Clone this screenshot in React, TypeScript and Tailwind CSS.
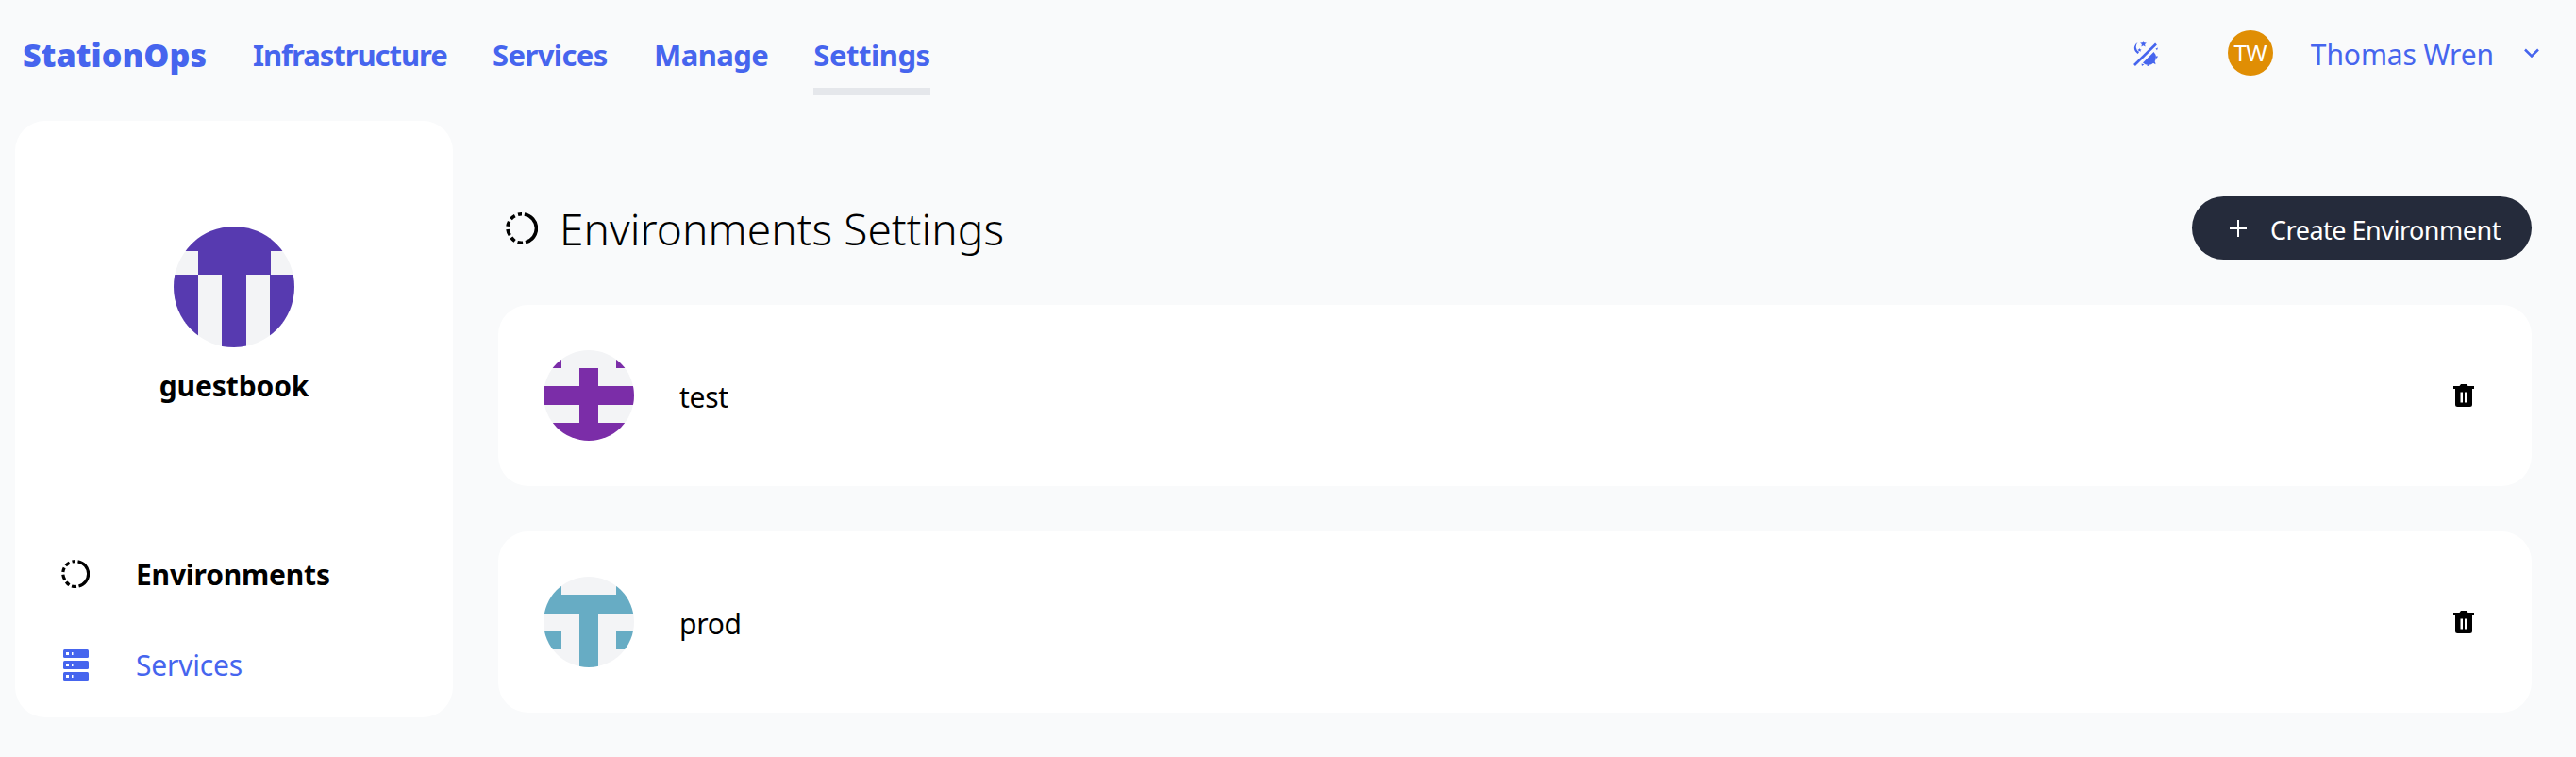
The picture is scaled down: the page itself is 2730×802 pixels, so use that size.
const Identicon = ({ rows, color, size }: { rows: string[]; color: string; size: string }) => (
  <svg viewBox="0 0 5 5" shapeRendering="crispEdges" className={`${size} shrink-0 rounded-full bg-[#f3f4f6]`}>
    {rows.flatMap((row, y) =>
      row.split("").map((cell, x) => (cell === "x" ? <rect key={`${x}-${y}`} x={x} y={y} width="1.01" height="1.01" fill={color} /> : null)),
    )}
  </svg>
);

const DashedCircle = ({ className }: { className: string }) => (
  <svg viewBox="0 0 30 30" fill="none" stroke="currentColor" strokeWidth="3.200" className={className}>
    <path d="M17.500 1.800A13.400 13.400 0 0 1 18.500 28" />
    <path d="M16 28.400A13.400 13.400 0 0 1 11 28" />
    <path d="M8.500 26.800A13.400 13.400 0 0 1 5.200 23.500" />
    <path d="M3.800 21.300A13.400 13.400 0 0 1 1.800 15.800" />
    <path d="M1.800 13A13.400 13.400 0 0 1 3.200 8.600" />
    <path d="M4.800 6.200A13.400 13.400 0 0 1 8.600 3.200" />
    <path d="M11.500 2A13.400 13.400 0 0 1 15 1.600" />
  </svg>
);

const ServerIcon = () => (
  <svg viewBox="0 0 27 33" className="h-[33px] w-[27px]">
    {[0, 12, 24].map((y) => (
      <g key={y}>
        <rect x="0" y={y} width="27" height="9" rx="1.5" fill="#4665ee" />
        <rect x="3" y={y + 3} width="3" height="3" fill="#fff" />
        <rect x="9" y={y + 3} width="1.5" height="3" fill="#fff" />
      </g>
    ))}
  </svg>
);

const TrashIcon = () => (
  <svg viewBox="0 0 22 25" className="h-[25px] w-[22px]">
    <path d="M0 3h6.500L8 1h6l1.500 2H22v3H0z" fill="#000" />
    <path fillRule="evenodd" clipRule="evenodd" d="M2 6h18v16.500a2.500 2.500 0 0 1-2.500 2.500h-13A2.500 2.500 0 0 1 2 22.500zM7.500 9.500v11h2.500v-11zM12 9.500v11h2.500v-11z" fill="#000" />
  </svg>
);

const ThemeIcon = () => (
  <svg viewBox="0 0 27 27" className="h-[27px] w-[27px]" fill="#4665ee">
    <path d="M2 26 25 3.500" stroke="#4665ee" strokeWidth="2.600" />
    <path d="M5.500 2A6.500 6.500 0 0 0 3 11.500l2.500 2.500 1.500-1.500A7 7 0 0 1 5.500 2z" />
    <path d="m11.500 0 1 2.300 2.400.2-1.800 1.600.5 2.400-2.100-1.300-2.100 1.300.5-2.400-1.800-1.600 2.400-.2zM7.500 8l.6 1.300 1.400.1-1 1 .3 1.400-1.300-.7-1.300.7.3-1.400-1-1 1.400-.1z" />
    <path d="M11 23.500 22.500 12a8 8 0 0 1-11.500 11.500z" />
    <path d="m24.500 8.500 2.500-1-1 2.700zM27 16.500h-3l1.700 2.500zM21.500 23.500l3 1.700-.6-3.300zM16 25.500l-1.200 2.800 3.200-.8zM9.500 24.500l.5 2.500 2.400-1.800z" />
  </svg>
);

const Card = ({ name, rows, color }: { name: string; rows: string[]; color: string }) => (
  <div className="flex h-[192px] items-center rounded-[32px] bg-white pl-[48px] pr-[61px]">
    <Identicon rows={rows} color={color} size="size-[96px]" />
    <span className="ml-[48px] mt-[3px] text-[30px] leading-none text-black tracking-[-0.3px]">{name}</span>
    <button className="ml-auto -mt-[2px]">
      <TrashIcon />
    </button>
  </div>
);

export default function App() {
  return (
    <div className="flex h-[802px] w-full flex-col overflow-hidden bg-[#f9fafb] font-['Noto_Sans',sans-serif]">
      <header className="flex h-[128px] shrink-0 items-start justify-between">
        <nav className="flex h-[101px] items-start pl-[24px] text-[31px] font-bold leading-[116px] tracking-[-1.05px] text-[#4665ee]">
          <a className="w-[244px] text-[34px] font-black tracking-[0.1px]">StationOps</a>
          <a className="w-[254px]">Infrastructure</a>
          <a className="w-[171px] tracking-[-0.6px]">Services</a>
          <a className="w-[169px] tracking-[-0.55px]">Manage</a>
          <a className="h-[101px] w-[124px] border-b-8 border-[#e5e7eb] text-center tracking-[-0.45px]">Settings</a>
        </nav>
        <div className="flex h-[112px] items-center pr-[39px] text-[#4665ee]">
          <ThemeIcon />
          <span className="ml-[74px] flex size-[48px] items-center justify-center rounded-full bg-[#e08e04] text-[24px] tracking-[-0.5px] text-white">TW</span>
          <span className="ml-[40px] mt-[2px] text-[30px] tracking-[-0.1px]">Thomas Wren</span>
          <svg viewBox="0 0 16 10" fill="none" stroke="#4665ee" strokeWidth="2.500" className="ml-[32px] h-[10px] w-[16px]">
            <path d="M1 1.500 8 8.500l7-7" />
          </svg>
        </div>
      </header>

      <div className="flex items-start pl-[16px] pr-[47px]">
        <aside className="flex h-[632px] w-[464px] shrink-0 flex-col items-center rounded-[32px] bg-white pt-[112px]">
          <Identicon rows={["xxxxx", ".xxx.", "x.x.x", "x.x.x", "x.x.x"]} color="#573ab0" size="size-[128px]" />
          <h2 className="mt-[20px] text-[30px] font-bold leading-[42px] tracking-[-0.1px] text-black">guestbook</h2>
          <div className="mt-auto flex w-full flex-col pb-[8px] pl-[49px] text-[30px] tracking-[-0.2px]">
            <div className="flex h-[96px] items-center font-bold text-black">
              <span className="flex w-[79px]">
                <DashedCircle className="size-[30px]" />
              </span>
              Environments
            </div>
            <div className="flex h-[96px] items-center text-[#4665ee]">
              <span className="flex w-[79px] pl-[2px]">
                <ServerIcon />
              </span>
              Services
            </div>
          </div>
        </aside>

        <main className="ml-[48px] flex min-w-0 flex-1 flex-col gap-[48px] pt-[80px]">
          <div className="flex h-[67px] items-center justify-between">
            <h1 className="flex items-center pl-[8px] text-[46px] font-light leading-none tracking-[0.1px] text-black">
              <DashedCircle className="mr-[23px] size-[34px]" />
              Environments Settings
            </h1>
            <button className="flex h-[67px] w-[360px] items-center rounded-full bg-[#252b3b] pl-[39px] pt-[5px] text-[27px] tracking-[-0.5px] text-white">
              <svg viewBox="0 0 20 20" fill="none" stroke="#fff" strokeWidth="2" className="mr-[24px] -mt-[5px] size-[20px]">
                <path d="M10 1v18M1 10h18" />
              </svg>
              Create Environment
            </button>
          </div>
          <Card name="test" color="#7b2da8" rows={["x...x", "..x..", "xxxxx", "..x..", "xxxxx"]} />
          <Card name="prod" color="#67acc4" rows={["x...x", "xxxxx", "..x..", "x.x.x", "..x.."]} />
        </main>
      </div>
    </div>
  );
}
